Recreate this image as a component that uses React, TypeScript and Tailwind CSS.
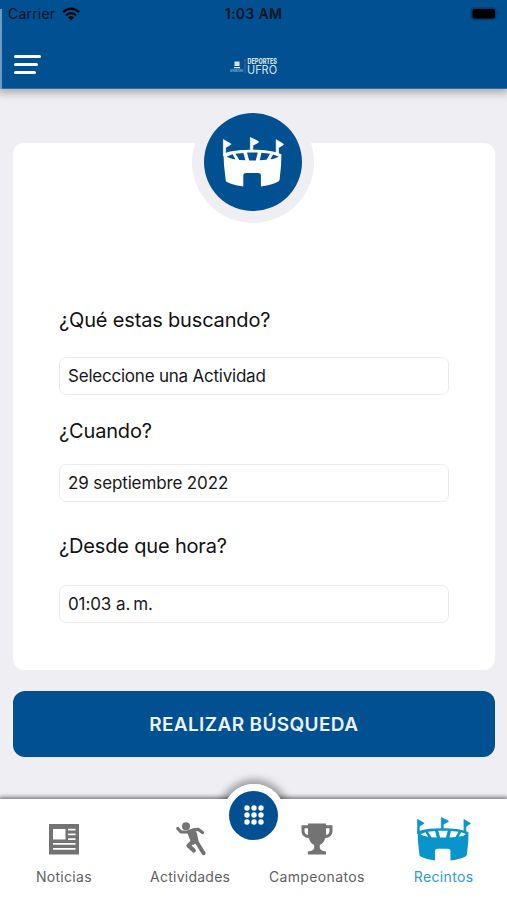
import type { ReactNode } from 'react';
import clsx from 'clsx';

interface IconProps {
  className?: string;
}

function StadiumIcon({ className }: IconProps) {
  return (
    <svg viewBox="0 0 62 50" fill="currentColor" className={className} aria-hidden="true">
      {/* flags */}
      <g stroke="currentColor" strokeWidth="0.7" strokeLinejoin="round">
        <path d="M1.4 2.6 8.7 6.8Q9 7.4 8.4 7.8L3.6 10.6V19H1.4Z" />
        <path d="M28.4.5 36.4 4.4Q36.8 5 36.2 5.5L30.8 8.4V14H28.4Z" />
        <path d="M54.2 2.7 61.3 6.9Q61.6 7.5 61 8L56.5 10.8V17H54.2Z" />
      </g>
      {/* body and stands */}
      <path
        fillRule="evenodd"
        d="M1.5 16.5C10 13.4 20 12.8 30.5 12.8S51 13.6 59.4 17.2L59.1 28 57.6 42.5Q57.4 43.9 56 44.8C51 47.2 45 48.7 38.9 49.4V38.5Q38.9 36 36.4 36H24Q21.3 36 21.3 38.5V49.4C15 48.7 9 47.2 5 45 3.9 44.4 3.7 43.7 3.6 42.3L2 28Z
        M4.8 19.6 10.5 17.3 13.6 22.4C9.8 22 6.5 21 4.8 19.6Z
        M13.4 16.8 21.4 15.9 23.4 23.2 17.4 22.9Z
        M25 15.6 35.8 15.6 33.8 23.4H27.2Z
        M39.4 15.8 48 16.7 44.6 22.8 37.8 23.2Z
        M51.2 17.4 56.5 19.4C55 20.9 52 21.9 48.3 22.3Z"
      />
    </svg>
  );
}

function NewsIcon({ className }: IconProps) {
  return (
    <svg viewBox="0 0 30 31" className={className} aria-hidden="true">
      <path
        fill="currentColor"
        fillRule="evenodd"
        d="M0 0H30V30.5H0ZM4 5V15.5H16.5V5ZM19 4.8V6.6H26.5V4.8ZM19 9.5V11.3H26.5V9.5ZM19 14.2V16H26.5V14.2ZM4 18.9V20.7H26.5V18.9ZM4 23.9V25.7H26.5V23.9Z"
      />
    </svg>
  );
}

function RunnerIcon({ className }: IconProps) {
  return (
    <svg viewBox="0 0 30 34" className={className} aria-hidden="true">
      <circle cx="10" cy="4.2" r="4" fill="currentColor" />
      <g fill="none" stroke="currentColor" strokeLinecap="round" strokeLinejoin="round">
        <path strokeWidth="3.2" d="M1.8 6.5 5 10 12 9.8 17 7.9 22.5 7.4 26.4 10.6" />
        <path strokeWidth="4.2" d="M18.5 18 12.5 23.6 17.8 28.5" />
        <path strokeWidth="4" d="M19.5 18 27.6 31.2" />
      </g>
      <path fill="currentColor" d="M11 10 18.5 6.8 21 11.5 22.5 19 17.3 23 14.4 18.8Z" />
    </svg>
  );
}

function TrophyIcon({ className }: IconProps) {
  return (
    <svg viewBox="0 0 32 32" className={className} aria-hidden="true">
      <path
        fill="currentColor"
        fillRule="evenodd"
        d="M7 .5H25V2.3H31.5V8C31.5 12 28.5 14.8 24.3 15 23.2 18.5 21.3 21 18.8 22V25.3C19.3 27 21 27.8 25 28.5V31.5H6.8V28.5C11 27.8 12.7 27 13.2 25.3V22C10.7 21 8.8 18.5 7.7 15 3.5 14.8.5 12 .5 8V2.3H7ZM3.5 5.2V8C3.5 10.2 4.8 11.6 7 12V5.2ZM25 5.2V12C27.2 11.6 28.5 10.2 28.5 8V5.2Z"
      />
    </svg>
  );
}

function WifiIcon({ className }: IconProps) {
  return (
    <svg viewBox="0 0 18 14" className={className} aria-hidden="true">
      <g fill="none" stroke="currentColor" strokeWidth="2.3">
        <path d="M1 5.2Q9-1.9 17 5.2" />
        <path d="M3.9 8.3Q9 3.9 14.1 8.3" />
      </g>
      <path fill="currentColor" d="M6 10.3Q9 8 12 10.3L9 13.5Z" />
    </svg>
  );
}

function DotsIcon({ className }: IconProps) {
  return (
    <svg viewBox="0 0 20 20" fill="currentColor" className={className} aria-hidden="true">
      {[3, 10, 17].map((cy) => [3, 10, 17].map((cx) => <circle key={`${cx}-${cy}`} cx={cx} cy={cy} r="2.7" />))}
    </svg>
  );
}

function UfroLogo() {
  return (
    <svg viewBox="0 0 48 19" className="h-[19px] w-12 overflow-visible" aria-label="Deportes UFRO">
      <g fill="#d5e5f2">
        <path d="M5.5 4.5h5v4.5h-5zM5 10h6v1.2H5z" />
        <text x="1" y="14.8" fontSize="3" fontWeight="600" textLength="13" lengthAdjust="spacingAndGlyphs" opacity="0.75">
          UFRONTERA
        </text>
        <text x="18.5" y="6.6" fontSize="7.2" fontWeight="800" textLength="29.5" lengthAdjust="spacingAndGlyphs">
          DEPORTES
        </text>
        <text x="18" y="17.2" fontSize="12.3" fontWeight="400" textLength="30" lengthAdjust="spacingAndGlyphs">
          UFRO
        </text>
      </g>
      <path d="M16 2v3" stroke="#b44b6b" strokeWidth="1" />
      <path d="M16 6v10" stroke="#5d7ba7" strokeWidth="0.7" />
    </svg>
  );
}

function Header() {
  return (
    <header className="relative z-10 h-[89px] border-b border-[#376d9d] bg-[#015092] shadow-[0_2px_8px_2px_rgba(70,60,60,0.38)]">
      <div className="grid h-[27px] grid-cols-3 items-center px-2 text-[#071324]">
        <div className="flex items-center gap-[7px]">
          <span className="text-[14px] tracking-[0.2px]">Carrier</span>
          <WifiIcon className="h-[14px] w-[18px] text-black" />
        </div>
        <span className="text-center text-[14px] font-semibold tracking-[0.35px]">1:03 AM</span>
        <div className="flex justify-end">
          <svg viewBox="0 0 30 14" className="h-[14px] w-[30px]" aria-hidden="true">
            <rect x="1.5" y="0.3" width="26" height="13" rx="4" fill="#023c70" />
            <rect x="3.5" y="2" width="22.5" height="9.6" rx="2.5" fill="#000" />
            <path d="M28.5 4.8Q31 6.8 28.5 8.8Z" fill="#023c70" />
          </svg>
        </div>
      </div>
      <div className="grid h-[61px] grid-cols-3 items-center px-[14px]">
        <button type="button" aria-label="Menú" className="mt-[14px] flex flex-col gap-[5px]">
          <span className="h-[3px] w-[27px] rounded-full bg-white" />
          <span className="h-[3px] w-[24px] rounded-full bg-white" />
          <span className="h-[3px] w-[22px] rounded-full bg-white" />
        </button>
        <div className="flex justify-center pt-[18px]">
          <UfroLogo />
        </div>
      </div>
      <span className="absolute top-[9px] left-0 h-[80px] w-[1.5px] bg-[#6c9cc4]" />
    </header>
  );
}

interface FieldProps {
  label: string;
  value: string;
  labelClass: string;
  valueClass: string;
  className?: string;
}

function Field({ label, value, labelClass, valueClass, className }: FieldProps) {
  return (
    <div className={clsx('flex flex-col', className)}>
      <label className={clsx('text-[20px] leading-[26px] tracking-[-0.17px] text-[#111113]', labelClass)}>
        {label}
      </label>
      <button
        type="button"
        className={clsx(
          'flex h-[38px] items-center rounded-[7px] border border-[#ececee] px-2 pt-px text-[17px] text-[#18181a]',
          valueClass,
        )}
      >
        {value}
      </button>
    </div>
  );
}

interface TabProps {
  label: string;
  active?: boolean;
  textClass: string;
  children: ReactNode;
}

function Tab({ label, active, textClass, children }: TabProps) {
  return (
    <a className={clsx('flex flex-col items-center', active ? 'text-[#0a94cc]' : 'text-[#737373]')}>
      <span className="flex h-[68px] flex-col justify-end">{children}</span>
      <span className={clsx('text-[14px] leading-5', active ? 'text-[#2d9bd8]' : 'text-[#5f5f5f]', textClass)}>
        {label}
      </span>
    </a>
  );
}

export default function App() {
  return (
    <div className="flex h-[900px] w-[507px] flex-col overflow-hidden bg-[#eeeef3] font-['Inter',sans-serif]">
      <Header />

      <main className="flex flex-1 flex-col pt-[54px] pr-[12.5px] pl-[13px]">
        <section className="relative h-[527px] rounded-[11px] bg-white px-[46px] pt-[164px]">
          <div className="absolute -top-[42px] left-[179px] flex size-[122px] items-center justify-center rounded-full bg-[#eeeef3]">
            <div className="flex size-[98px] items-center justify-center rounded-full bg-[#015092] text-white">
              <StadiumIcon className="h-[50px] w-[62px]" />
            </div>
          </div>
          <Field
            label="¿Qué estas buscando?"
            value="Seleccione una Actividad"
            labelClass="mb-[24px]"
            valueClass="tracking-[-0.22px]"
          />
          <Field
            className="mt-[23px]"
            label="¿Cuando?"
            value="29 septiembre 2022"
            labelClass="mb-[20px]"
            valueClass="tracking-[-0.13px]"
          />
          <Field
            className="mt-[31px]"
            label="¿Desde que hora?"
            value={'01:03 a.\u2009m.'}
            labelClass="mb-[26px]"
            valueClass="tracking-[-0.1px]"
          />
        </section>

        <button
          type="button"
          className="mt-[21px] h-[66px] rounded-[12px] bg-[#015092] pt-0.5 text-[19px] font-semibold tracking-[0.37px] text-[#eef3fa]"
        >
          REALIZAR BÚSQUEDA
        </button>
      </main>

      <nav className="relative h-[101px]">
        <div className="absolute -top-[15px] left-1/2 size-[62px] -translate-x-1/2 rounded-full bg-white shadow-[0_0_7px_5px_rgba(60,60,60,0.42)]" />
        <div className="relative grid h-full grid-cols-4 bg-white shadow-[0_-1px_4px_1px_rgba(50,50,50,0.6)]">
          <Tab label="Noticias" textClass="ml-px tracking-[0.3px]">
            <NewsIcon className="mb-[12px] ml-px h-[31px] w-[30px]" />
          </Tab>
          <Tab label="Actividades" textClass="tracking-[0.25px]">
            <RunnerIcon className="mb-[11px] ml-[2px] h-[34px] w-[30px]" />
          </Tab>
          <Tab label="Campeonatos" textClass="tracking-[0.37px]">
            <TrophyIcon className="mb-[12px] ml-px size-[32px]" />
          </Tab>
          <Tab label="Recintos" textClass="tracking-[0.37px]" active>
            <StadiumIcon className="mr-px mb-[6px] h-[44px] w-[55px]" />
          </Tab>
        </div>
        <button
          type="button"
          aria-label="Más opciones"
          className="absolute -top-[15px] left-1/2 flex size-[62px] -translate-x-1/2 items-center justify-center rounded-full bg-white"
        >
          <span className="flex size-[49px] items-center justify-center rounded-full bg-[#015092] text-white">
            <DotsIcon className="size-5" />
          </span>
        </button>
      </nav>
    </div>
  );
}
